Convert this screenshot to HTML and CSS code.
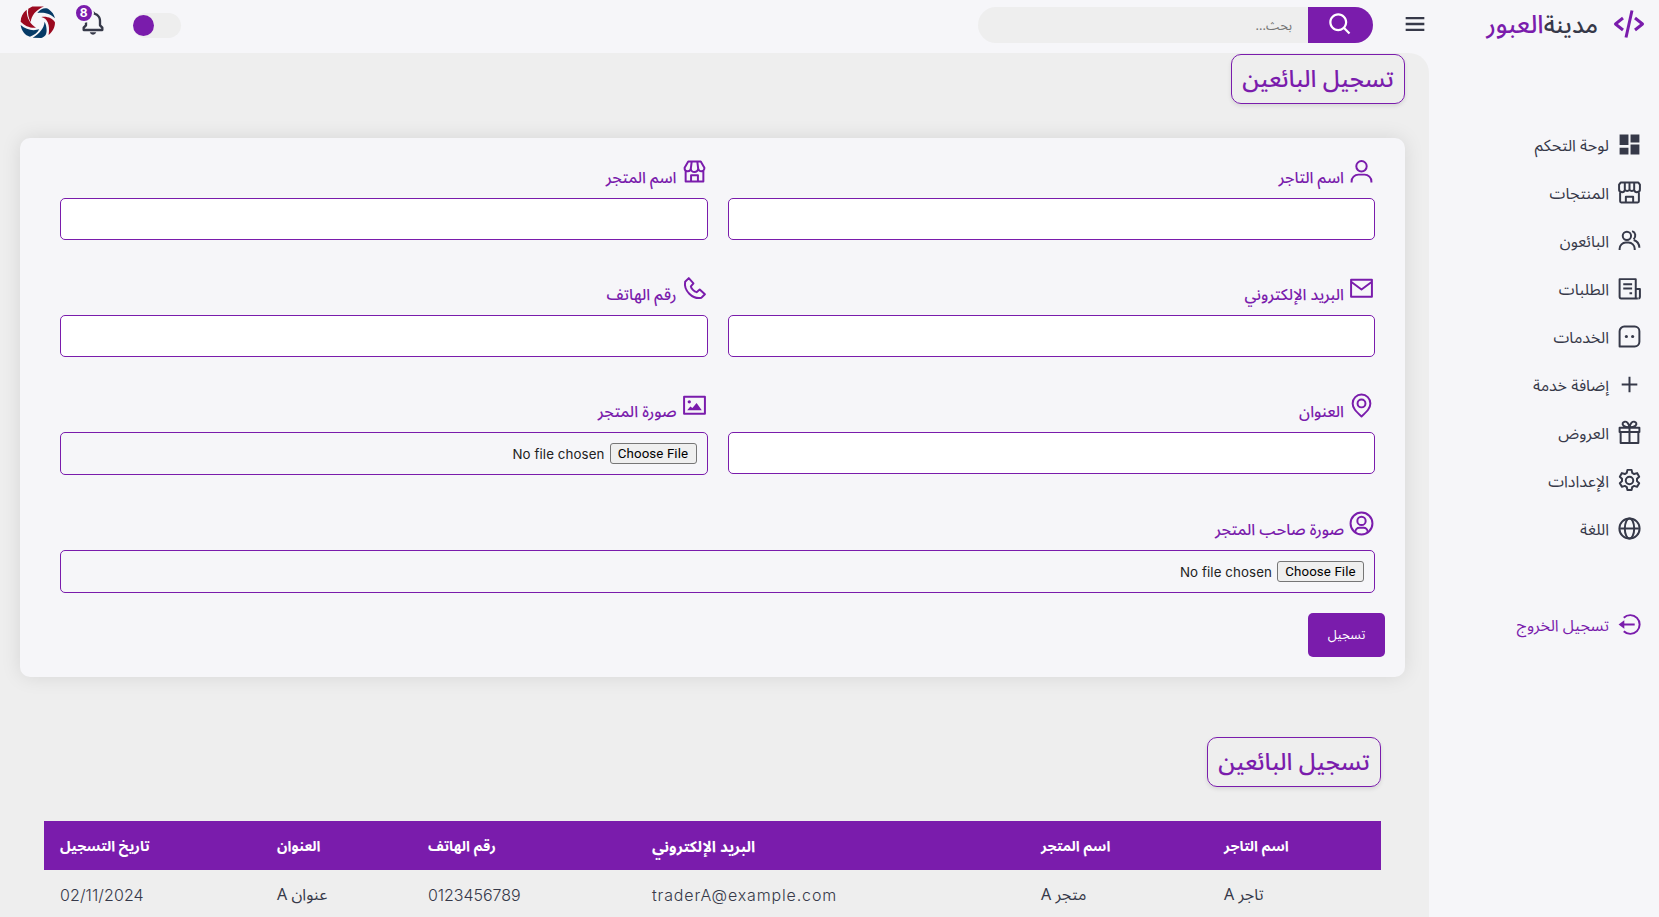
FILE: index.html
```html
<!DOCTYPE html>
<html lang="ar" dir="rtl">
<head>
<meta charset="utf-8">
<title>مدينة العبور</title>
<link rel="stylesheet" href="styles.css">
</head>
<body>
<svg width="0" height="0" class="defs">
<defs>
<g id="i-store" fill="none" stroke="currentColor" stroke-width="1.900" stroke-linejoin="round"><path d="M3.500 11.500V21.500h17v-10M6 2.500h12l3.500 6a3 3 0 0 1-6 .500 3.500 3.500 0 0 1-7 0 3 3 0 0 1-6-.500zM9.300 2.500 8.500 9M14.700 2.500l.8 6.500M8.700 21.500v-6h6.600v6"/></g>
<g id="i-shop" fill="none" stroke="currentColor" stroke-width="1.900" stroke-linejoin="round"><path d="M3 11v9.500a1 1 0 0 0 1 1h16a1 1 0 0 0 1-1V11M3.500 2.500h17l1.500 2v4a2.800 2.800 0 0 1-5.500 1 3 3 0 0 1-4.500 0 3 3 0 0 1-4.500 0A2.800 2.800 0 0 1 2 8.500v-4zM7.500 3v6M12 3v6M16.500 3v6M8.500 21.500v-5.500h7v5.500"/></g>
</defs>
</svg>
<div class="app">
  <aside class="sidebar">
    <a class="brand"><svg viewBox="0 0 24 24"><path d="m7.375 16.781 1.250-1.562L4.601 12l4.024-3.219-1.250-1.562-5 4a1 1 0 0 0 0 1.562l5 4zm9.250-9.562-1.250 1.562L19.399 12l-4.024 3.219 1.250 1.562 5-4a1 1 0 0 0 0-1.562l-5-4zm-1.649-4.003-4 18-1.953-.434 4-18z"/></svg><span class="brand-name"><b>مدينة</b>العبور</span></a>
    <nav class="menu">
      <a><svg viewBox="0 0 24 24"><path d="M2.500 2.500h8.500v10H2.500zM2.500 15h8.500v6.500H2.500zM13 2.500h8.500v7.500h-8.500zM13 12h8.500v9.500h-8.500z"/></svg><span>لوحة التحكم</span></a>
      <a><svg viewBox="0 0 24 24"><use href="#i-shop"/></svg><span>المنتجات</span></a>
      <a><svg class="line" viewBox="0 0 24 24"><circle cx="9.500" cy="7.500" r="4"/><path d="M2.500 21v-1a6 6 0 0 1 6-6h2.500a6 6 0 0 1 6 6v1M14.500 3c3.500 1.200 4 5 1.500 8M16 11.500c3.500 1 5.300 3.500 5.500 7.500"/></svg><span>البائعون</span></a>
      <a><svg class="line" viewBox="0 0 24 24"><path d="M20 21.500H4A1.500 1.500 0 0 1 2.500 20V3H18v9.500h4V20a1.500 1.500 0 0 1-1.500 1.500M18 12v9M6 8h8.500M6 12h8.500M12 16.500h2.500"/></svg><span>الطلبات</span></a>
      <a><svg class="line" viewBox="0 0 24 24"><path d="M2.500 21.500V7a4.500 4.500 0 0 1 4.500-4.500h10a4.500 4.500 0 0 1 4.500 4.500v10a4.500 4.500 0 0 1-4.500 4.500z"/><g fill="currentColor" stroke="none"><circle cx="9" cy="12" r="1.500"/><circle cx="15" cy="12" r="1.500"/></g></svg><span>الخدمات</span></a>
      <a><svg class="line" viewBox="0 0 24 24"><path d="M12 4.500v15M4.500 12h15"/></svg><span>إضافة خدمة</span></a>
      <a><svg class="line" viewBox="0 0 24 24"><path d="M2.500 7.500h19v4H2.500zM3.500 12v10h17V12M12 8v14M12 7C6 7 5 4.500 5.500 3c.6-1.600 3-2 4.500-.5 1 1.200 2 2.500 2 4.500zM12 7c6 0 7-2.500 6.500-4-.6-1.600-3-2-4.500-.5-1 1.200-2 2.500-2 4.500z"/></svg><span>العروض</span></a>
      <a><svg class="line" viewBox="0 0 24 24"><circle cx="12" cy="12" r="3.600"/><path d="M10 1.800h4l.6 2.900 1.900 1.100 2.800-.9 2 3.500-2.100 2v2.200l2.100 2-2 3.500-2.800-.9-1.900 1.100-.6 2.900h-4l-.6-2.900-1.900-1.100-2.800.9-2-3.500 2.100-2v-2.200l-2.100-2 2-3.500 2.800.9 1.900-1.100z"/></svg><span>الإعدادات</span></a>
      <a><svg class="line" viewBox="0 0 24 24"><circle cx="12" cy="12" r="9.700"/><ellipse cx="12" cy="12" rx="4.500" ry="9.700"/><path d="M3 12h18"/></svg><span>اللغة</span></a>
    </nav>
    <a class="logout"><svg class="line" viewBox="0 0 24 24"><path d="M6.500 5.500a9 9 0 1 1 0 13M6 12h11"/><path d="M7 8v8L1.500 12z" fill="currentColor" stroke="none"/></svg><span>تسجيل الخروج</span></a>
  </aside>
  <div class="content">
    <header class="navbar">
      <svg class="burger" viewBox="0 0 24 24"><path d="M4 6h16v2H4zm0 5h16v2H4zm0 5h16v2H4z"/></svg>
      <form class="search"><button type="button"><svg viewBox="0 0 24 24"><path d="M10 18a7.952 7.952 0 0 0 4.897-1.688l4.396 4.396 1.414-1.414-4.396-4.396A7.952 7.952 0 0 0 18 10c0-4.411-3.589-8-8-8s-8 3.589-8 8 3.589 8 8 8zm0-14c3.309 0 6 2.691 6 6s-2.691 6-6 6-6-2.691-6-6 2.691-6 6-6z"/></svg></button><span class="placeholder">بحث...</span></form>
      <div class="toggle"><i></i></div>
      <div class="bell"><svg viewBox="0 0 24 24"><path d="M19 13.586V10c0-3.217-2.185-5.927-5.145-6.742C13.562 2.520 12.846 2 12 2s-1.562.520-1.855 1.258C7.185 4.074 5 6.783 5 10v3.586l-1.707 1.707A1 1 0 0 0 3 16v2a1 1 0 0 0 1 1h16a1 1 0 0 0 1-1v-2a1 1 0 0 0-.293-.707L19 13.586zM19 17H5v-.586l1.707-1.707A1 1 0 0 0 7 14v-4c0-2.757 2.243-5 5-5s5 2.243 5 5v4a1 1 0 0 0 .293.707L19 16.414V17zm-7 5a2.980 2.980 0 0 0 2.818-2H9.182A2.980 2.980 0 0 0 12 22z"/></svg><span class="count">8</span></div>
      <svg class="avatar" viewBox="60 17 107 98"><g fill="#9b0a20"><path d="M80 28C68 38 62 50 62 64C74 76 90 84 108 82C92 72 80 55 80 28Z"/><path d="M132 18H97L85 25C82 40 86 52 92 66C94 45 108 28 132 18Z"/><path d="M124 50C142 54 151 72 146 104C158 95 166 80 165 66C158 54 142 47 124 50Z"/></g><g fill="#053a66"><path d="M112 38C122 24 138 20 148 28C156 34 163 42 165 54C150 38 130 35 112 38Z"/><path d="M134 64C132 85 118 100 98 112L124 113C136 110 140 102 140 90C140 80 138 72 134 64Z"/><path d="M62 74C64 90 75 106 90 109C103 104 112 98 118 87C98 93 78 88 62 74Z"/></g></svg>
    </header>
    <main>
      <h1 class="title"><span>تسجيل البائعين</span></h1>
      <section class="card">
        <div class="fields">
          <label class="field"><span class="name"><svg class="line" viewBox="0 0 24 24"><circle cx="12" cy="7" r="5"/><path d="M2.500 22.500v-1a6.500 6.500 0 0 1 6.500-6.500h6a6.500 6.500 0 0 1 6.500 6.500v1"/></svg><span>اسم التاجر</span></span><input type="text"></label>
          <label class="field"><span class="name"><svg viewBox="0 0 24 24"><use href="#i-store"/></svg><span>اسم المتجر</span></span><input type="text"></label>
          <label class="field"><span class="name"><svg class="line" viewBox="0 0 24 24"><path d="M2 3.500h20v16.500H2zM2 5.500l10 7.500 10-7.500"/></svg><span>البريد الإلكتروني</span></span><input type="text"></label>
          <label class="field"><span class="name"><svg class="line" viewBox="0 0 24 24"><path d="M3 5.500 6.500 2l4.500 5-2.500 3c.5 2 3 5 5.500 5.500l3-2.500 5 4.500-3.500 3.500C10 22.500 1.500 14 3 5.500z"/></svg><span>رقم الهاتف</span></span><input type="text"></label>
          <label class="field"><span class="name"><svg class="line" viewBox="0 0 24 24"><path d="M12 22.500C6.500 17.500 3.500 14.500 3.500 10a8.500 8.500 0 0 1 17 0c0 4.500-3 7.500-8.500 12.500z"/><circle cx="12" cy="10" r="3.800"/></svg><span>العنوان</span></span><input type="text"></label>
          <label class="field"><span class="name"><svg class="line" viewBox="0 0 24 24"><path d="M2 3.500h20v16.500H2z"/><path d="M5 16.500h14l-5-7-4 5-2-1.500z" fill="currentColor" stroke="none"/><circle cx="7" cy="8.500" r="1.600" fill="currentColor" stroke="none"/></svg><span>صورة المتجر</span></span><span class="file"><button type="button">Choose File</button><em>No file chosen</em></span></label>
          <label class="field wide"><span class="name"><svg class="line" viewBox="0 0 24 24"><circle cx="12" cy="12" r="10.500"/><circle cx="12" cy="9.500" r="4"/><path d="M6 20.500c0-3 2-4.500 4-4.500h4c2 0 4 1.500 4 4.500"/></svg><span>صورة صاحب المتجر</span></span><span class="file"><button type="button">Choose File</button><em>No file chosen</em></span></label>
        </div>
        <button type="button" class="submit">تسجيل</button>
      </section>
      <section class="list">
        <h2 class="title"><span>تسجيل البائعين</span></h2>
        <table>
          <colgroup><col class="c1"><col class="c2"><col class="c3"><col class="c4"><col class="c5"><col class="c6"></colgroup>
          <thead><tr><th>اسم التاجر</th><th>اسم المتجر</th><th class="mail">البريد الإلكتروني</th><th>رقم الهاتف</th><th>العنوان</th><th>تاريخ التسجيل</th></tr></thead>
          <tbody><tr><td>تاجر A</td><td>متجر A</td><td class="email">traderA@example.com</td><td class="digits">0123456789</td><td>عنوان A</td><td class="date">02/11/2024</td></tr></tbody>
        </table>
      </section>
    </main>
  </div>
</div>
</body>
</html>
```
FILE: styles.css
```css
:root {
  --purple: #7a1cac;
  --light: #f6f6f9;
  --grey: #eee;
  --dark: #363949;
}
* { box-sizing: border-box; margin: 0; padding: 0; }
body {
  width: 1659px; height: 917px; overflow: hidden;
  background: var(--light); color: var(--dark);
  font: 16px "Noto Sans Arabic", "Noto Sans", sans-serif;
}
.defs { display: block; }
svg { fill: currentColor; flex: none; display: block; }
.line { fill: none; stroke: currentColor; stroke-width: 1.9; stroke-linejoin: round; }
button, input { font: inherit; }
.app { display: flex; height: 917px; }
.sidebar { width: 230px; flex: none; }
.brand { display: flex; align-items: center; height: 48px; padding-right: 12px; gap: 13px; color: var(--purple); font-size: 25.3px; font-weight: 500; }
.brand svg { width: 36px; height: 36px; }
.brand-name { padding-top: 2px; }
.brand b { color: var(--dark); font-weight: 500; font-size: 24px; }
.menu { margin-top: 72px; }
.menu a, .logout { display: flex; align-items: center; height: 48px; padding-right: 17px; gap: 8px; white-space: nowrap; font-size: 16px; font-weight: 400; }
.menu span, .logout span { padding-top: 4px; }
.menu svg, .logout svg { width: 25px; height: 25px; }
.logout { color: var(--purple); margin-top: 48px; }
.content { flex: 1; min-width: 0; }
.navbar { display: flex; align-items: center; height: 53px; padding-left: 19px; padding-bottom: 3px; }
.burger { width: 28px; height: 28px; margin-top: -2px; }
.search { display: flex; width: 395px; height: 36px; margin-right: 28px; margin-left: auto; border-radius: 18px; overflow: hidden; background: var(--grey); }
.search button { width: 65px; border: 0; background: var(--purple); color: #fff; display: grid; place-items: center; }
.search svg { width: 27px; height: 27px; margin-top: -1px; }
.placeholder { padding: 5px 16px; font-size: 13px; color: #757575; letter-spacing: 0; }
.toggle { width: 48px; height: 25px; border-radius: 13px; background: var(--grey); display: flex; justify-content: flex-end; align-items: center; }
.toggle i { width: 21px; height: 21px; border-radius: 50%; background: var(--purple); }
.bell { position: relative; margin: -4px 26px 0 23px; }
.bell svg { width: 28px; height: 28px; }
.count { position: absolute; top: -6px; left: -5px; width: 20px; height: 20px; border: 2px solid var(--light); border-radius: 50%; background: var(--purple); color: #fff; font: 700 12px/16px "Inter", sans-serif; text-align: center; }
.avatar { width: 35.6px; height: 32.7px; margin-top: -6px; margin-left: 1px; }
main { height: 864px; padding: 1px 24px 0 20px; background: var(--grey); border-top-right-radius: 20px; }
.title { width: 174px; height: 50px; border: 1px solid var(--purple); border-radius: 10px; color: var(--purple); font-size: 23.8px; font-weight: 500; display: grid; place-items: center; white-space: nowrap; box-shadow: 0 2px 4px rgba(0,0,0,.1); }
.title span { margin-top: -1px; }
.card { margin-top: 34px; height: 539px; padding: 12px 20px 20px 30px; border-radius: 10px; background: var(--light); box-shadow: 0 0 20px rgba(0,0,0,.1); }
.fields { display: grid; grid-template-columns: 1fr 1fr; }
.field { display: block; height: 117px; padding: 0 10px; color: var(--purple); }
.field.wide { grid-column: 1 / 3; height: 112px; padding-top: 1px; }
.name { display: flex; height: 48px; gap: 5px; font-weight: 500; font-size: 15.8px; padding: 9px 1px 0 0; }
.name svg { width: 25px; height: 25px; }
.name > span { padding-top: 2px; }
.field input { display: block; width: 100%; height: 42px; border: 1px solid var(--purple); border-radius: 5px; background: #fff; }
.file { display: flex; align-items: center; height: 43px; padding: 0 10px; gap: 5px; border: 1px solid var(--purple); border-radius: 5px; font: 13.3px "Inter", sans-serif; color: #222; }
.file button { width: 87px; height: 21px; border: 1px solid #767676; border-radius: 3px; background: #efefef; color: #000; font: 13.3px "Roboto", sans-serif; letter-spacing: .1px; }
.file em { font-style: normal; letter-spacing: .1px; }
.submit { width: 77px; height: 44px; border: 0; border-radius: 5px; background: var(--purple); color: #fff; font-size: 13px; font-weight: 400; display: block; }
.list { padding: 60px 24px 0; }
.list .title { margin-bottom: 34px; }
table { width: 1337px; border-collapse: collapse; table-layout: fixed; }
.c1 { width: 173px; } .c2 { width: 183px; } .c3 { width: 389px; } .c4 { width: 224px; } .c5 { width: 151px; } .c6 { width: 217px; }
th { height: 49px; padding: 2px 16px 0; background: var(--purple); color: #fff; text-align: left; font-weight: 700; font-size: 14.3px; }
th.mail { font-size: 15.3px; }
td { height: 50px; padding: 0 16px; text-align: left; font-weight: 400; }
.email, .digits, .date { font-family: "Inter", sans-serif; font-weight: 350; }
.email { letter-spacing: .85px; }
.digits { letter-spacing: -.05px; }
.date { letter-spacing: .1px; }
```
